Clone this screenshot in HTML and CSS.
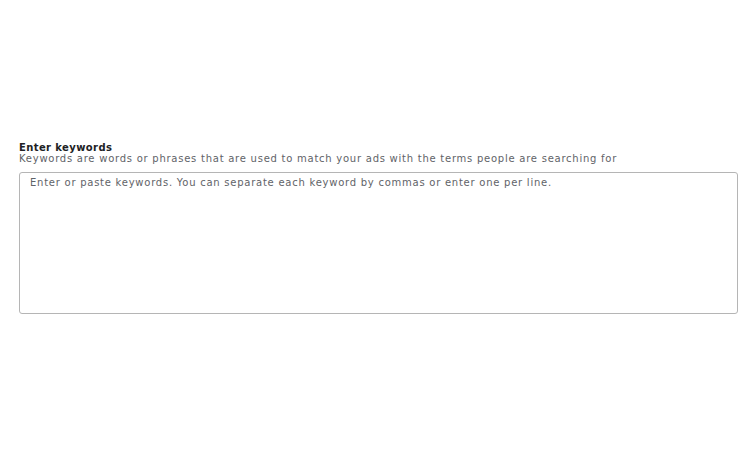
FILE: index.html
```html
<!DOCTYPE html>
<html lang="en">
<head>
<meta charset="utf-8">
<title>Enter keywords</title>
<link rel="stylesheet" href="styles.css">
</head>
<body>
<main class="page">
  <section class="field">
    <div class="label">Enter keywords</div>
    <div class="hint">Keywords are words or phrases that are used to match your ads with the terms people are searching for</div>
    <textarea class="keywords" placeholder="Enter or paste keywords. You can separate each keyword by commas or enter one per line."></textarea>
  </section>
</main>
</body>
</html>
```
FILE: styles.css
```css
html, body {
  margin: 0;
  padding: 0;
  background: #ffffff;
}
body {
  font-family: "DejaVu Sans", Roboto, sans-serif;
  width: 750px;
  height: 450px;
}
.page {
  padding: 142px 13px 0 19px;
}
.field {
  display: flex;
  flex-direction: column;
}
.label {
  font-size: 10px;
  line-height: 11px;
  font-weight: 700;
  color: #202124;
  letter-spacing: 0.4px;
}
.hint {
  font-size: 10px;
  line-height: 11px;
  color: #5f6368;
  letter-spacing: 0.75px;
}
.keywords {
  margin-top: 8px;
  box-sizing: border-box;
  width: 719px;
  height: 142px;
  border: 1px solid #b5b5b5;
  border-radius: 3px;
  padding: 4px 10px;
  font-family: "DejaVu Sans", Roboto, sans-serif;
  font-size: 10px;
  line-height: 11px;
  letter-spacing: 0.75px;
  resize: none;
  outline: none;
  color: #202124;
}
.keywords::placeholder {
  color: #5f6368;
  opacity: 1;
}
```
